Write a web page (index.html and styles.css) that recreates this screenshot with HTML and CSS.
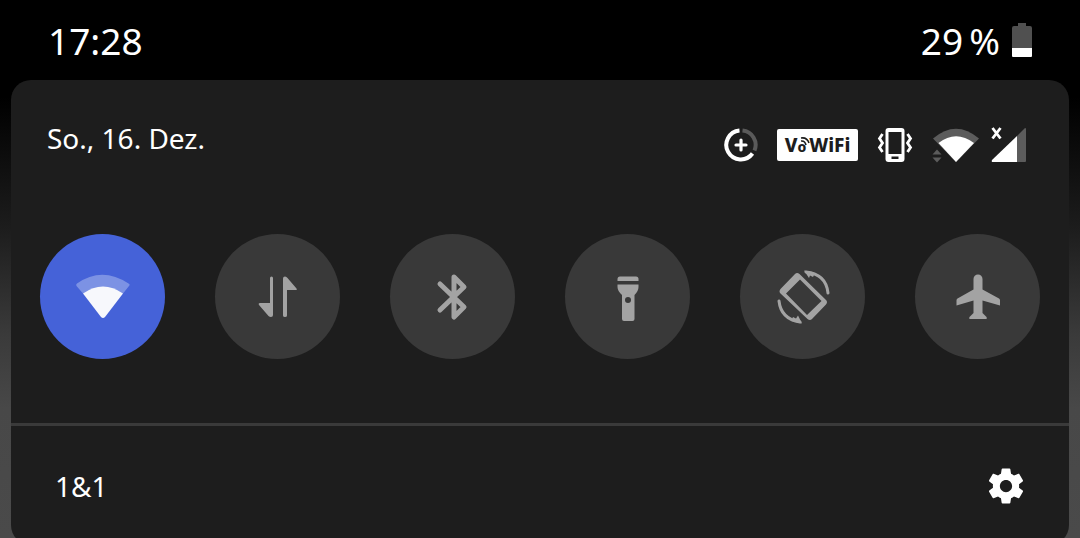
FILE: index.html
```
<!DOCTYPE html>
<html lang="de">
<head>
    <meta charset="UTF-8">
    <meta name="viewport" content="width=device-width, initial-scale=1.0">
    <title>Schnelleinstellungen</title>
    <link rel="stylesheet" href="styles.css">
</head>
<body>
    <header class="status-bar">
        <time class="clock">17:28</time>
        <div class="battery">
            <span>29&thinsp;%</span>
            <svg width="20" height="34" viewBox="0 0 20 34">
                <path fill="#505050" d="M6 0h8v3h4q2 0 2 2v20H0V5q0-2 2-2h4z"/>
                <path fill="#fff" d="M0 25h20v8q0 1-1 1H1q-1 0-1-1z"/>
            </svg>
        </div>
    </header>

    <main class="panel">
        <div class="panel-header">
            <span class="date">So., 16. Dez.</span>
            <div class="system-icons">
                <!-- Datensparmodus -->
                <svg width="34" height="34" viewBox="0 0 34 34" fill="none" stroke="#fff">
                    <path stroke-width="4" d="M15.500 2.500A14.500 14.500 0 1 0 28.500 25.500"/>
                    <path stroke="#5a5a5a" stroke-width="4" d="M18.500 2.500A14.500 14.500 0 0 1 30.500 22.500"/>
                    <path stroke-width="3.200" stroke-linecap="round" d="M17 12v10M12 17h10"/>
                </svg>
                <!-- VoWiFi -->
                <span class="vowifi">
                    <span>V</span><span class="vowifi-o">o<svg width="10" height="9" viewBox="0 0 10 9" fill="none" stroke="#1d1d1d" stroke-width="1.600"><path d="M1 1Q7 0 9 6M1 4Q5 3.500 6 8"/></svg></span><span>WiFi</span>
                </span>
                <!-- Vibration -->
                <svg width="36" height="36" viewBox="0 0 36 36">
                    <path fill="#fff" fill-rule="evenodd" d="M11.500 1h13q3 0 3 3v28q0 3-3 3h-13q-3 0-3-3V4q0-3 3-3zM11.500 5v22h13V5zM14.500 29.500v2.500h7v-2.500z"/>
                    <path fill="none" stroke="#fff" stroke-width="2.800" d="M5.500 7 2.500 11.500 5.500 16 2.500 20.500 5.500 25M30.500 7 33.500 11.500 30.500 16 33.500 20.500 30.500 25"/>
                </svg>
                <!-- WLAN -->
                <svg width="48" height="36" viewBox="0 0 48 36">
                    <path fill="#5c5c5c" d="M1 11.500Q24-8 47 11.500L24 35z"/>
                    <path fill="#fff" d="M6.500 16Q24 2.500 42 16L24 35z"/>
                    <path fill="#1d1d1d" d="M5 19 12 27v4l-6 5H0V25z"/>
                    <path fill="#5c5c5c" d="M.500 27.500 5 22.500 9.500 27.500zM.500 30.500h9L5 35.500z"/>
                </svg>
                <!-- Mobilfunk -->
                <svg class="signal" width="36" height="36" viewBox="0 0 36 36">
                    <path fill="#5c5c5c" d="M34 1q1 0 1 1v32q0 1-1 1H26V9z"/>
                    <path fill="#fff" d="M26 9v26H2q-2 0-1-2z"/>
                    <path stroke="#fff" stroke-width="2.800" d="M1.500 1 9.500 11.500M9.500 1 1.500 11.500"/>
                </svg>
            </div>
        </div>

        <div class="tiles">
            <button class="tile active" aria-label="WLAN" aria-pressed="true">
                <svg viewBox="0 0 64 64">
                    <path fill="#7c92e4" d="M5.500 21Q4.500 19.500 6 18.500Q31 1 57.500 18.500Q59.500 19.500 58 21L52 28.500H12z"/>
                    <path fill="#f7f8fc" d="M12 28.500Q32 14.500 52 28.500L34 52Q32 54 30 52z"/>
                </svg>
            </button>
            <button class="tile" aria-label="Mobile Daten" aria-pressed="false">
                <svg viewBox="0 0 64 64">
                    <path d="M24 13q0-1.500 1.500-1.500t1.500 1.500v37q0 2-2 2-1.500 0-2.500-1L13 40q-1-2 1-2H24z"/>
                    <path d="M41 50.500q0 1.500-2 1.500t-2-1.500V13.500q0-2 2-2 1.500 0 2.500 1.500l9 10.500q1 1.500-1 1.500H41z"/>
                </svg>
            </button>
            <button class="tile" aria-label="Bluetooth" aria-pressed="false">
                <svg viewBox="0 0 64 64">
                    <path class="line" d="M19 19 43 42 33 52V12L43 22 19 45"/>
                </svg>
            </button>
            <button class="tile" aria-label="Taschenlampe" aria-pressed="false">
                <svg viewBox="0 0 64 64">
                    <path d="M21.500 16v-2q0-2.500 2.500-2.500h16q2.500 0 2.500 2.500v2z"/>
                    <path fill-rule="evenodd" d="M21.500 19.500h21V22q0 4-4 8v24q0 2-2 2H28q-2 0-2-2V30q-4.500-4-4.500-8zM32 32a3 3 0 1 0 0 6 3 3 0 1 0 0-6z"/>
                </svg>
            </button>
            <button class="tile" aria-label="Automatisch drehen" aria-pressed="false">
                <svg viewBox="0 0 64 64">
                    <path fill-rule="evenodd" d="M24 9q2-2 4.500 0L55 35q2 2 0 4.500L41 54q-2 2-4.500 0L9.500 28.500q-2-2 0-4.500zM29 14.500 15 28.500 36 50 50.500 36z"/>
                    <path fill="none" stroke="#a3a3a3" stroke-width="3" stroke-linecap="round" d="M35 7Q55 9 57 28M8 36Q10 54 29 57"/>
                    <path d="M33 5.500 44 8 42 12 39 10.500 38 13zM31 58.500 20 56 22 52 25 53.500 27 50.500z"/>
                </svg>
            </button>
            <button class="tile" aria-label="Flugmodus" aria-pressed="false">
                <svg viewBox="0 0 64 64">
                    <path d="M27.500 14a4.500 4.500 0 0 1 9 0v10.500L53 33.500q1 .500 1 2v5L36.500 35.500V48l4 4q1 2-1 2h-15q-2 0-1-2l4-4V35.500L10.500 40.500v-5q0-1.500 1-2l16-9z"/>
                </svg>
            </button>
        </div>

        <footer class="panel-footer">
            <span>1&amp;1</span>
            <button class="settings" aria-label="Einstellungen">
                <svg width="42" height="42" viewBox="0 0 24 24" fill="#fff">
                    <path d="M19.430 12.980c.040-.320.070-.640.070-.980s-.030-.660-.070-.980l2.110-1.650c.190-.150.240-.420.120-.640l-2-3.460c-.120-.220-.390-.300-.610-.220l-2.490 1c-.520-.400-1.080-.730-1.690-.980l-.380-2.650C14.460 2.180 14.250 2 14 2h-4c-.250 0-.460.180-.490.420l-.380 2.650c-.610.250-1.170.590-1.690.980l-2.490-1c-.230-.090-.490 0-.610.220l-2 3.460c-.130.220-.070.490.120.640l2.110 1.650c-.040.320-.070.650-.070.980s.030.660.070.980l-2.110 1.650c-.190.150-.240.420-.120.640l2 3.460c.120.220.390.300.610.220l2.490-1c.520.400 1.080.730 1.690.980l.380 2.650c.030.240.240.420.490.420h4c.250 0 .460-.180.490-.420l.380-2.650c.610-.250 1.170-.590 1.690-.980l2.490 1c.230.090.490 0 .610-.220l2-3.460c.120-.220.070-.490-.120-.640l-2.110-1.650zM12 15.500c-1.930 0-3.500-1.570-3.500-3.500s1.570-3.500 3.500-3.500 3.500 1.570 3.500 3.500-1.570 3.500-3.500 3.500z"/>
                </svg>
            </button>
        </footer>
    </main>
</body>
</html>
```
FILE: styles.css
```
* {
    box-sizing: border-box;
}
body {
    margin: 0;
    height: 100vh;
    overflow: hidden;
    background: linear-gradient(#000 18%, #1c1c1c 42%, #3a3a3a 62%, #484848 76%, #4a4a4a);
    color: #fff;
    font-family: "Noto Sans", sans-serif;
    font-size: 28px;
}
svg {
    display: block;
}
button {
    border: none;
    padding: 0;
    cursor: pointer;
}
.status-bar {
    display: flex;
    justify-content: space-between;
    align-items: center;
    height: 80px;
    padding: 0 48px;
    background: #000;
    font-size: 37px;
}
.battery {
    display: flex;
    align-items: center;
    gap: 12px;
}
.panel {
    margin: 0 11px;
    border-radius: 20px;
    background: #1d1d1d;
}
.panel-header {
    display: flex;
    justify-content: space-between;
    align-items: center;
    height: 130px;
    padding: 0 42px 0 36px;
}
.date {
    padding-bottom: 14px;
}
.system-icons {
    display: flex;
    align-items: center;
    gap: 19px;
}
.vowifi {
    display: flex;
    justify-content: center;
    align-items: center;
    width: 81px;
    height: 32px;
    border-radius: 2px;
    background: #fff;
    color: #1d1d1d;
    font-size: 19px;
    font-weight: 800;
}
.vowifi-o {
    position: relative;
    padding: 3px 3px 0 0;
    font-size: 14px;
}
.vowifi-o svg {
    position: absolute;
    top: 3px;
    left: 3px;
}
.signal {
    margin-left: -8px;
}
.tiles {
    display: flex;
    justify-content: space-between;
    padding: 24px 29px 64px;
}
.tile {
    display: flex;
    justify-content: center;
    align-items: center;
    width: 125px;
    height: 125px;
    border-radius: 50%;
    background: #393939;
}
.tile svg {
    width: 64px;
    height: 64px;
    fill: #a3a3a3;
}
.tile .line {
    fill: none;
    stroke: #a3a3a3;
    stroke-width: 5;
    stroke-linecap: round;
    stroke-linejoin: round;
}
.tile.active {
    background: #4562d8;
}
.panel-footer {
    display: flex;
    justify-content: space-between;
    align-items: center;
    height: 122px;
    padding: 0 42px 0 44px;
    border-top: 3px solid #3a3a3a;
}
.settings {
    background: none;
}
```
